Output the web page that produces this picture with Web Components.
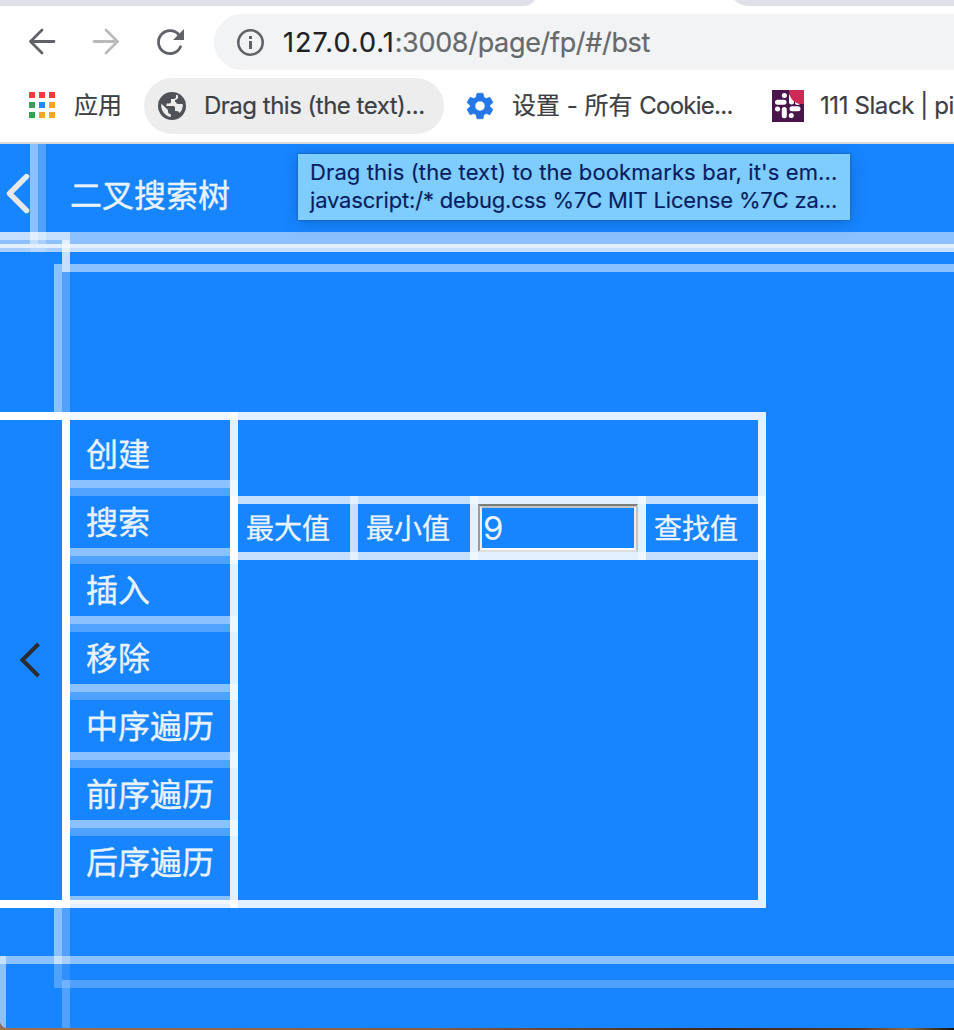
<!DOCTYPE html>
<html lang="zh"><head><meta charset="utf-8"><title>二叉搜索树</title>
<style>
html,body{margin:0;padding:0}
body{width:954px;height:1030px;overflow:hidden;background:#fff;font-family:Inter,"Noto Sans CJK SC",sans-serif}
</style></head><body>
<browser-window></browser-window>
<script>
const define=(name,html,init)=>customElements.define(name,class extends HTMLElement{
  constructor(){super();this.attachShadow({mode:'open'}).innerHTML=html;if(init)init(this.shadowRoot)}
});

define('tab-strip',`<style>:host{display:block;height:6px}svg{display:block}</style>
<svg width="954" height="6"><path d="M0 0H535Q531 6 522 6H0zM734 0H954V6H751Q740 6 734 0z" fill="#dee1e6"/></svg>`);

define('address-bar',`<style>
:host{display:flex;height:72px;align-items:center;box-sizing:border-box;padding-left:24px}
svg{display:block;flex:none}
.nav{display:flex;gap:28px;width:190px;flex:none}
.url{display:flex;align-items:center;flex:1;height:56px;border-radius:28px 0 0 28px;background:#f1f3f4;padding-left:20px;color:#66696c;font-size:27px;white-space:nowrap}
.url p{margin:0 0 0 17px;letter-spacing:-.33px;-webkit-text-stroke:.2px currentColor}
b{font-weight:400;color:#202124;letter-spacing:1px}
</style>
<div class="nav">
<svg width="36" height="36" viewBox="0 0 36 36" fill="none" stroke="#5f6368" stroke-width="2.8" stroke-linecap="round" stroke-linejoin="round"><path d="M30 17.5H6.5M18 6L6.5 17.5 18 29"/></svg>
<svg width="36" height="36" viewBox="0 0 36 36" fill="none" stroke="#bababc" stroke-width="2.8" stroke-linecap="round" stroke-linejoin="round"><path d="M6 17.5H29.5M18 6L29.5 17.5 18 29"/></svg>
<svg width="36" height="36" viewBox="0 0 36 36"><path d="M27.5 11.200A11.500 11.500 0 1 0 28.500 22.300" transform="translate(0 .5)" fill="none" stroke="#5f6368" stroke-width="2.8" stroke-linecap="round"/><path d="M32 5V16H21z" fill="#5f6368"/></svg>
</div>
<div class="url"><svg width="32" height="32" viewBox="0 0 32 32"><circle cx="16.5" cy="16.5" r="12.2" fill="none" stroke="#5f6368" stroke-width="2.6"/><path d="M15 10h3v3h-3zM15 15h3v8h-3z" fill="#5f6368"/></svg><p><b>127.0.0.1</b>:3008/page/fp/#/bst</p></div>`);

define('bookmark-item',`<style>
:host{display:flex;align-items:center;height:56px;box-sizing:border-box;flex:none;white-space:nowrap;color:#3c4043;font-size:24px;line-height:28px}
slot{display:block}
.i{flex:none;display:flex}
</style><span class="i"><slot name="icon"></slot></span><slot></slot>`);

define('bookmark-bar',`<style>
:host{display:flex;height:64px}
svg{display:block}
span{display:block;-webkit-text-stroke:.2px currentColor}
.a{padding-left:28px;width:144px}.a svg{margin-right:18px;margin-top:-2px}.a span{margin-top:-1px}
.b{width:300px;padding-left:12px;background:#ededed;border-radius:28px}.b svg{margin-right:16px}.b span{letter-spacing:-.5px;margin-top:-1px}
.c{width:328px;padding-left:20px}.c svg{margin-right:16px}.c span{margin-top:-1px}.c em{font-style:normal;letter-spacing:-.75px}
.d svg{margin-right:16px}.d span{letter-spacing:-.4px;margin-top:-1px}
</style>
<bookmark-item class="a"><svg slot="icon" width="28" height="28" viewBox="0 0 28 28"><path d="M1 1h6v6H1zM11 1h6v6h-6zM21 1h6v6h-6z" fill="#f43b3b"/><path d="M1 11h6v6H1zM1 21h6v6H1z" fill="#34a058"/><path d="M11 11h6v6h-6z" fill="#248af5"/><path d="M21 11h6v6h-6zM11 21h6v6h-6zM21 21h6v6h-6z" fill="#f3a526"/></svg><span>应用</span></bookmark-item>
<bookmark-item class="b"><svg slot="icon" width="32" height="32" viewBox="0 0 32 32"><circle cx="16" cy="16" r="14" fill="#4f5257"/><path d="M20 4.8V6.5Q20 9 17.5 9H15V12Q15 13.5 13 13.5H10.500V16H17.500Q19 16 19 17.500V21H20.500Q23 21 23.600 23Q26.800 20 26.800 16Q26.800 15 26.600 14H22Q20 14 20 12H19V10Q21 10 22 8V5.600zM5.300 13.500Q4.400 20.500 10 25Q12.400 26.800 14.800 27V24Q12 24 12 21.500V20z" fill="#ededed"/></svg><span>Drag this (the text)...</span></bookmark-item>
<bookmark-item class="c"><svg slot="icon" width="32" height="32" viewBox="0 0 32 32"><path fill="#2577e8" stroke="#2577e8" stroke-width=".6" stroke-linejoin="round" fill-rule="evenodd" d="M13 3.200h6l.9 4 2.300 1.300 3.700-1.300 3.100 5.400-3.100 2.600v1.600l3.100 2.600-3.100 5.400-3.700-1.300-2.300 1.300-.9 4h-6l-.9-4-2.300-1.300-3.700 1.300-3.100-5.400 3.100-2.600v-1.600l-3.100-2.600 3.100-5.400 3.700 1.300 2.300-1.300zM16 11a5 5 0 1 0 0 10 5 5 0 1 0 0-10z"/></svg><span>设置 - 所有 <em>Cookie...</em></span></bookmark-item>
<bookmark-item class="d"><svg slot="icon" width="32" height="32" viewBox="0 0 32 32"><path d="M0 0h32v32H0z" fill="#49154b"/><g stroke="#fff" stroke-width="5" stroke-linecap="round"><path d="M5.500 12.300H12M12.300 5.500h.1M19.500 6v6M20 18.800h6M25.500 12.500h.1M12.300 19.500v6.200M5.500 18.900h.1M19.200 25.600h.1"/></g><path d="M17 0h15v14H27Q17 11 17 0z" fill="#ce2a55"/></svg><span>111 Slack | pi</span></bookmark-item>`);

define('debug-outlines',`<style>:host{display:block;position:absolute;inset:0;pointer-events:none}svg{display:block}</style><svg width="954" height="886" viewBox="0 144 954 886" shape-rendering="crispEdges"></svg>`,root=>{
  const A='#3090ff',B='#51a2ff',C='#8cc1ff',D='#c5e0ff',E='#e2f0ff',F='#f1f7ff',G='#fafdff',W='#fff';
  // left, top, right, bottom, colour
  const r=[
  [30,144,38,232,C],[38,144,46,232,B],
  [0,232,70,240,D],[30,232,38,240,E],[38,232,46,240,'#d4e8ff'],[70,232,954,244,C],
  [0,240,62,244,C],[30,240,38,244,D],[38,240,46,244,'#a8cfff'],[62,240,70,252,E],
  [0,244,954,248,E],[62,244,70,248,F],[0,248,62,252,'#a8d0ff'],[30,248,46,252,'#b7d8ff'],[70,248,954,252,D],
  [62,252,70,272,D],[54,264,62,412,C],[62,272,70,412,B],[70,264,954,272,C],
  [0,412,70,420,W],[70,412,230,420,F],[230,412,238,420,G],[238,412,766,420,E],
  [62,420,70,900,W],[0,900,70,908,W],[70,896,230,900,C],[70,900,230,904,F],[70,904,230,908,E],
  [230,420,238,900,E],[230,900,238,908,G],[238,900,766,908,E],[758,420,766,900,E],
  [238,496,758,504,D],[238,552,758,560,D],[350,504,358,552,D],[350,496,358,504,E],[350,552,358,560,E],
  [470,496,646,504,E],[470,552,646,560,E],[470,504,478,552,E],[638,504,646,552,E],
  [470,496,478,504,F],[638,496,646,504,F],[470,552,478,560,F],[638,552,646,560,F],[758,496,766,560,G],
  [54,908,62,956,C],[62,908,70,956,B],[0,956,954,964,C],[0,956,6,964,D],[54,956,62,964,D],[62,956,70,964,'#a8cfff'],
  [0,964,6,1028,C],[54,964,62,988,B],[62,964,70,980,A],[62,980,70,988,'#70b2ff'],[70,980,954,988,B],[62,988,70,1028,B]];
  for(let y=480;y<=820;y+=68)r.push([70,y,230,y+8,C],[70,y+8,230,y+16,B],[230,y,238,y+16,F]);
  r.push([230,496,238,560,'#fdfeff']);
  root.querySelector('svg').innerHTML=r.map(([a,b,c,d,f])=>`<rect x="${a}" y="${b}" width="${c-a}" height="${d-b}" fill="${f}"/>`).join('')
    +'<path d="M0 1022Q1 1027 6 1028H0z" fill="#8d6a55" shape-rendering="auto"/>';
});

define('tree-menu',`<style>
:host{display:flex;flex-direction:column;gap:16px;width:168px;font-size:32px;line-height:52px;-webkit-text-stroke:.35px currentColor}
::slotted(*){display:block;height:52px;padding-left:16px}
</style><slot></slot>`);

define('search-row',`<style>
:host{display:grid;grid-template-columns:112px 112px 160px 112px;column-gap:8px;height:48px;font-size:28px;line-height:50px}
span{padding-left:8px;-webkit-text-stroke:.3px currentColor}
div{box-sizing:border-box;border:2px solid;border-color:#7c7e7a #c3c3c3 #dedede #9b9c9b;height:48px}
i{display:block;font:33px/41px Inter,sans-serif;box-sizing:border-box;height:44px;border:2px solid;border-color:#c3c5c2 #eee #fff #eee;padding-left:1px}
</style><span>最大值</span><span>最小值</span><div><i>9</i></div><span>查找值</span>`);

define('tool-tip',`<style>
:host{display:block;position:absolute;left:298px;top:10px;width:552px;height:66px;box-sizing:border-box;padding:4px 12px;background:#7fccff;box-shadow:0 2px 16px #003a7a55,0 0 2px #24557b;color:#061e61;font-size:22px;line-height:28px;white-space:nowrap;-webkit-text-stroke:.15px currentColor}
</style><slot></slot>`);

define('page-view',`<style>
:host{display:block;position:relative;height:886px;background:#1785ff;color:#e8f3ff;overflow:hidden}
header{display:flex;height:88px;align-items:center;font-size:32px}
header svg{width:30px;margin-right:40px}
header span{padding-top:9px;-webkit-text-stroke:.35px currentColor}
main{display:grid;grid-template-columns:70px 168px 528px;height:480px;margin-top:188px}
.back{align-self:center}
tree-menu{padding-top:9px}
search-row{padding-top:84px}
footer{height:2px;margin-top:128px;background:linear-gradient(90deg,#a0704e,#8b6045 45%,#3f251b 75%,#5b3521 90%,#8d6b43 95%,#14100d)}
.l1{letter-spacing:.12px}.l2{letter-spacing:-.18px}
</style>
<debug-outlines></debug-outlines>
<header><svg height="88"><path d="M26.500 32.500L9.500 49.500 26.500 66.500" fill="none" stroke="#e8e8e8" stroke-width="5.400" stroke-linecap="round" stroke-linejoin="round"/></svg><span>二叉搜索树</span></header>
<main><svg class="back" width="60" height="40"><path d="M38.500 4L22.500 20 38.500 36" fill="none" stroke="#292c30" stroke-width="4"/></svg>
<tree-menu><span>创建</span><span>搜索</span><span>插入</span><span>移除</span><span>中序遍历</span><span>前序遍历</span><span>后序遍历</span></tree-menu>
<search-row></search-row></main>
<footer></footer>
<tool-tip><div class="l1">Drag this (the text) to the bookmarks bar, it's em...</div><div class="l2">javascript:/* debug.css %7C MIT License %7C za...</div></tool-tip>`);

define('browser-window',`<style>:host{display:block;height:1030px}header{height:144px;box-sizing:border-box;border-bottom:2px solid #d9dadd;background:#fff}</style>
<header><tab-strip></tab-strip><address-bar></address-bar><bookmark-bar></bookmark-bar></header><page-view></page-view>`);
</script></body></html>
